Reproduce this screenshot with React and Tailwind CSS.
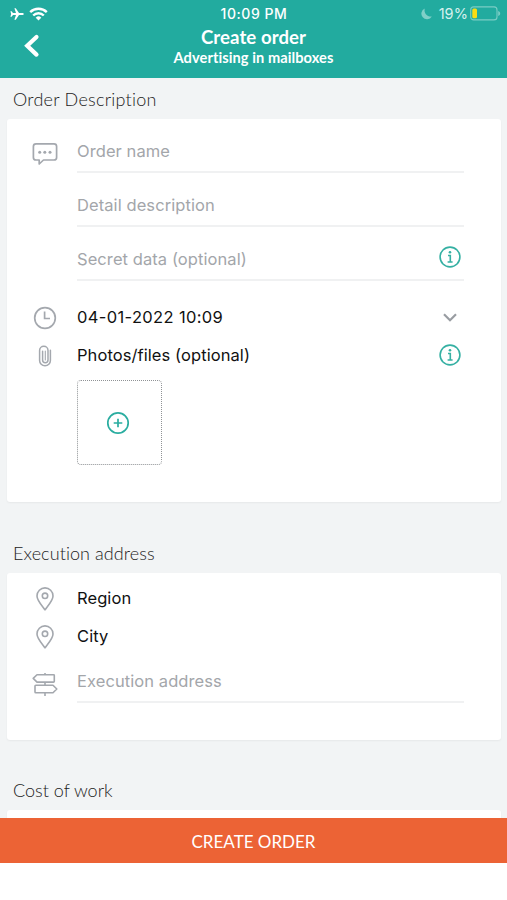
import React from "react";

const MessageIcon = () => (
  <svg width="26" height="24" viewBox="0 0 26 24" fill="none" stroke="#a4a8ae" strokeWidth="1.7" strokeLinejoin="round">
    <path d="M4 1.8h18a2.6 2.6 0 0 1 2.6 2.6v11a2.6 2.6 0 0 1-2.6 2.6H11.5L7.2 22v-4H4a2.6 2.6 0 0 1-2.6-2.6v-11A2.6 2.6 0 0 1 4 1.8z" />
    <g fill="#a4a8ae" stroke="none">
      <circle cx="7.7" cy="10.2" r="1.5" />
      <circle cx="12.8" cy="10.2" r="1.5" />
      <circle cx="18" cy="10.2" r="1.5" />
    </g>
  </svg>
);

const ClockIcon = () => (
  <svg width="24" height="24" viewBox="0 0 24 24" fill="none" stroke="#a4a8ae" strokeWidth="1.7">
    <circle cx="12" cy="12" r="10.3" />
    <path d="M11.6 5.5v7h5.4" />
  </svg>
);

const ClipIcon = () => (
  <svg width="14" height="22" viewBox="0 0 14 22" fill="none" stroke="#a4a8ae" strokeWidth="1.5" strokeLinecap="round">
    <path d="M12.4 5.2v10.2a5.4 5.4 0 0 1-10.8 0V5.4a4.2 4.2 0 0 1 8.4 0v9.7a2.7 2.7 0 0 1-5.4 0V6.2" />
    <path d="M7.3 6v9" strokeWidth="1.1" />
  </svg>
);

const PinIcon = () => (
  <svg width="18" height="24" viewBox="0 0 18 24" fill="none" stroke="#a4a8ae" strokeWidth="1.6" strokeLinejoin="round">
    <path d="M9 22.8C7.6 20.4 1 13.8 1 8.9a8 8 0 0 1 16 0c0 4.9-6.6 11.5-8 13.9z" />
    <circle cx="9" cy="8.8" r="2.7" />
  </svg>
);

const SignIcon = () => (
  <svg width="26" height="23" viewBox="0 0 26 23" fill="none" stroke="#a4a8ae" strokeWidth="1.6" strokeLinejoin="round">
    <path d="M5 1.7h16.5a.8.8 0 0 1 .8.8v5.8a.8.8 0 0 1-.8.8H5L1.2 5.4z" />
    <path d="M21 12.3H3.8a.8.8 0 0 0-.8.8v5.8a.8.8 0 0 0 .8.8H21l3.8-3.7z" />
    <path d="M13 0v1.7M13 9.1v3.2M13 19.7V23" />
  </svg>
);

const InfoIcon = () => (
  <svg width="22" height="22" viewBox="0 0 22 22" fill="none" stroke="#35b0a3" strokeWidth="1.6">
    <circle cx="11" cy="11" r="9.9" />
    <circle cx="11" cy="6.2" r="1.3" fill="#35b0a3" stroke="none" />
    <path d="M9 9.5h2.3v6.3M8.6 16h5" />
  </svg>
);

const PlusIcon = () => (
  <svg width="24" height="24" viewBox="0 0 24 24" fill="none" stroke="#2aada0" strokeWidth="1.7">
    <circle cx="12" cy="12" r="10.2" />
    <path d="M12 7.7v8.6M7.7 12h8.6" />
  </svg>
);

const StatusBar = () => (
  <div className="grid grid-cols-3 items-center h-[26px] pl-[7px] pr-[6px]">
    <div className="flex items-center gap-[5px] pl-[3px] pt-[1px]">
      <svg width="14" height="12" viewBox="0 0 14 12" fill="#fff">
        <path d="M13.8 6c0 .6-.8 1-1.8 1H9l-3.2 4.7H4.4L6 7H3L1.6 8.7H.4L1.2 6 .4 3.3h1.2L3 5h3L4.4.3h1.4L9 5h3c1 0 1.8.4 1.8 1z" />
      </svg>
      <svg width="19" height="14" viewBox="0 0 19 14" fill="none" stroke="#fff" strokeWidth="2.4">
        <path d="M1.2 5.2a11.8 11.8 0 0 1 16.6 0" />
        <path d="M4.2 8.5a7.5 7.5 0 0 1 10.6 0" />
        <path d="M9.5 13.5l-2.8-2.8a4 4 0 0 1 5.6 0z" fill="#fff" stroke="none" />
      </svg>
    </div>
    <div className="pt-[1px] text-center text-[14px] font-medium tracking-[0.55px] whitespace-nowrap">10:09 PM</div>
    <div className="flex items-center justify-end pt-[1px]">
      <svg width="11" height="12" viewBox="0 0 11 12" fill="#7fd0c8" className="mr-[7px]">
        <path d="M3.8.5a6.3 6.3 0 0 0 7 8A5.6 5.6 0 1 1 3.8.5z" />
      </svg>
      <span className="text-[14.5px] text-[#d6f1ee] mr-[2px]">19%</span>
      <svg width="31" height="15" viewBox="0 0 31 15" fill="none">
        <rect x=".7" y=".9" width="26.3" height="13" rx="3" stroke="#7bcdc5" strokeWidth="1.1" />
        <rect x="2.3" y="2.5" width="4.7" height="9.8" rx="1.5" fill="#fbdc13" />
        <path d="M28.2 5v5c1.3-.4 2-1.4 2-2.5s-.7-2.1-2-2.5z" fill="#7bcdc5" />
      </svg>
    </div>
  </div>
);

const Header = () => (
  <header className="h-[78px] shrink-0 bg-[#22ab9f] text-white">
    <StatusBar />
    <div className="grid grid-cols-[60px_1fr_60px] font-['Lato',sans-serif] font-bold">
      <button className="flex items-start pl-[24px] pt-[7px]">
        <svg width="16" height="25" viewBox="0 0 16 25" fill="none" stroke="#fff" strokeWidth="4.2" strokeLinecap="round">
          <path d="M12.5 4 3.2 12.8l9.3 8.8" />
        </svg>
      </button>
      <div className="text-center">
        <h1 className="text-[18.6px] leading-[22px]">Create order</h1>
        <p className="text-[14.6px] leading-[20px]">Advertising in mailboxes</p>
      </div>
    </div>
  </header>
);

const SectionTitle = ({ className = "", children }) => (
  <h2 className={`pl-[6px] h-10 leading-10 font-['Lato',sans-serif] font-light text-[18px] text-[#222] ${className}`}>
    {children}
  </h2>
);

const Card = ({ className, children }) => (
  <div className={`bg-white rounded-[3px] pl-[19px] pr-[37px] shadow-[0_1px_2px_rgba(0,0,0,0.05)] ${className}`}>{children}</div>
);

const Field = ({ icon, label, info }) => (
  <div className="flex h-[54px]">
    <div className="w-[51px] shrink-0 flex items-center justify-center pt-[16px] pr-[13px]">{icon}</div>
    <div className="flex-1 flex items-center justify-between border-b-2 border-[#f0f1f2] pt-3 pr-[3px]">
      <span className="text-[#a3a6aa]">{label}</span>
      {info && (
        <div className="pb-[4px]">
          <InfoIcon />
        </div>
      )}
    </div>
  </div>
);

const Row = ({ icon, label, right, className = "" }) => (
  <div className="flex items-center h-[38px]">
    <div className="w-[51px] shrink-0 flex items-center justify-center pr-[13px] pt-[2px]">{icon}</div>
    <span className={`flex-1 text-[#111] ${className}`}>{label}</span>
    <div className="pr-[3px] w-[25px] flex justify-center">{right}</div>
  </div>
);

const App = () => {
  return (
    <div className="w-[507px] h-[900px] flex flex-col overflow-hidden bg-white font-['Inter',sans-serif] text-[16.5px] tracking-[0.08px]">
      <Header />

      <main className="h-[740px] overflow-hidden bg-[#f2f4f5] pl-[7px] pr-[6px] pt-[1px]">
        <SectionTitle className="tracking-[0.25px]">Order Description</SectionTitle>
        <Card className="h-[383px]">
          <Field icon={<MessageIcon />} label="Order name" />
          <Field label="Detail description" />
          <Field label="Secret data (optional)" info />
          <div className="h-[17px]" />
          <Row
            icon={<ClockIcon />}
            label="04-01-2022 10:09"
            className="tracking-[0.35px]"
            right={
              <svg width="14" height="9" viewBox="0 0 14 9" fill="none" stroke="#999da2" strokeWidth="2.2">
                <path d="m1 1.2 6 6 6-6" />
              </svg>
            }
          />
          <Row icon={<ClipIcon />} label="Photos/files (optional)" right={<InfoIcon />} />
          <button className="ml-[51px] mt-[6px] w-[85px] h-[85px] rounded-[4px] border border-dotted border-[#8f9295] flex items-center justify-center pr-[3px]">
            <PlusIcon />
          </button>
        </Card>

        <div className="h-[31px]" />
        <SectionTitle>Execution address</SectionTitle>
        <Card className="h-[167px] pt-[6px]">
          <Row icon={<PinIcon />} label="Region" />
          <Row icon={<PinIcon />} label="City" />
          <div className="-mt-[6px]">
            <Field icon={<SignIcon />} label="Execution address" />
          </div>
        </Card>

        <div className="h-[30px]" />
        <SectionTitle className="tracking-[0px]">Cost of work</SectionTitle>
        <Card className="h-[60px]" />
      </main>

      <button className="h-[45px] shrink-0 bg-[#ec6335] text-white font-['Lato',sans-serif] text-[17px] tracking-normal pt-[2px]">
        CREATE ORDER
      </button>
    </div>
  );
};

export default App;
